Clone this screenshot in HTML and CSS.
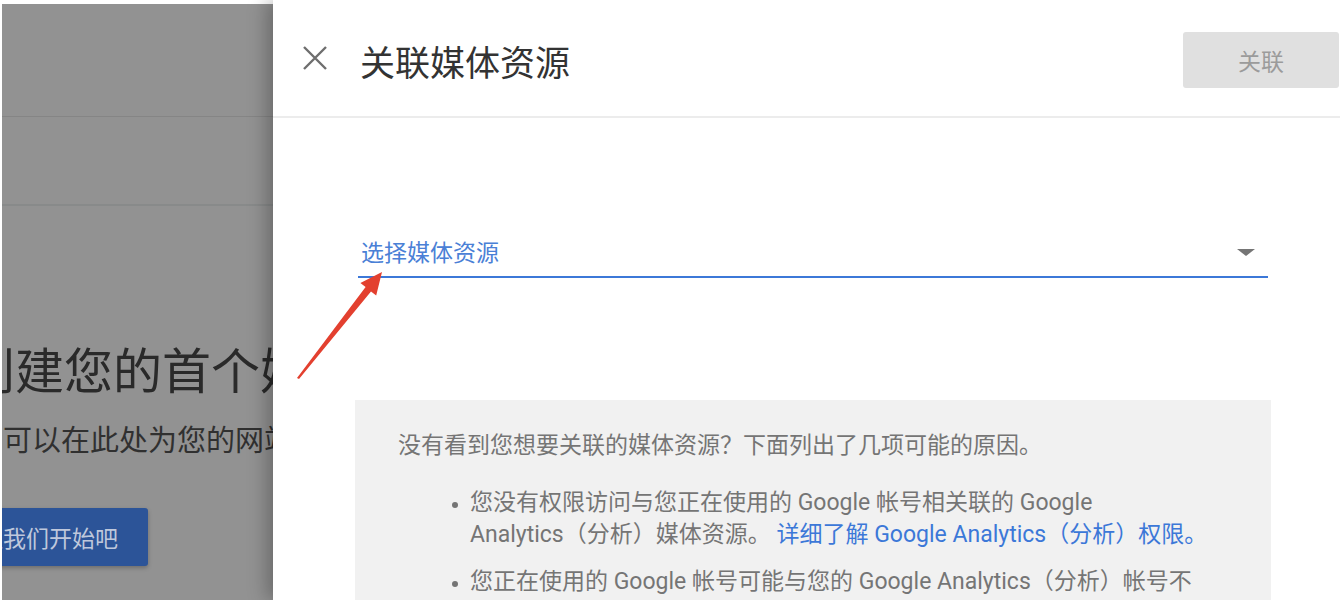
FILE: index.html
```html
<!DOCTYPE html>
<html lang="zh-CN">
<head>
    <meta charset="UTF-8">
    <meta name="viewport" content="width=device-width, initial-scale=1.0">
    <title>关联媒体资源</title>

    <link rel="stylesheet" href="styles.css">
</head>
<body>

    <div class="backdrop">
        <div class="bg-header"></div>
        <div class="bg-tabs"></div>
        <div class="bg-content">
            <h1 class="bg-title">创建您的首个媒体资源</h1>
            <p class="bg-sub">您可以在此处为您的网站或应用创建媒体资源</p>
            <button class="bg-btn">让我们开始吧</button>
        </div>
    </div>

    <div class="panel">
        <div class="panel-header">
            <button class="close" aria-label="关闭">
                <svg width="24" height="24" viewBox="0 0 24 24">
                    <path d="M1 1 L23 23 M23 1 L1 23" stroke="#6e6e6e" stroke-width="2.4" fill="none"/>
                </svg>
            </button>
            <h2 class="panel-title">关联媒体资源</h2>
            <button class="link-btn" disabled>关联</button>
        </div>

        <div class="panel-body">
            <div class="select">
                <span class="select-label">选择媒体资源</span>
                <span class="caret"></span>
            </div>

            <div class="info">
                <p>没有看到您想要关联的媒体资源？下面列出了几项可能的原因。</p>
                <ul>
                    <li>您没有权限访问与您正在使用的 Google 帐号相关联的 Google<br>Analytics（分析）媒体资源。 <a href="#">详细了解 Google Analytics（分析）权限。</a></li>
                    <li>您正在使用的 Google 帐号可能与您的 Google Analytics（分析）帐号不同，请切换帐号后重试。</li>
                </ul>
            </div>
        </div>
    </div>

    <svg class="annotation" width="1340" height="600" viewBox="0 0 1340 600">
        <polygon points="297,378 365.6,287.1 360.4,283.1 382,272 376.2,295.5 371,291.5 299,379" fill="#e3402f"/>
    </svg>

</body>
</html>
```

FILE: styles.css
```css
body {
    margin: 0;
    padding: 0;
    height: 600px;
    overflow: hidden;
    display: flex;
    background: #fff;
    font-family: Roboto, "Noto Sans CJK SC", sans-serif;
}

/* dimmed page behind the panel */
.backdrop {
    width: 271px;
    margin: 4px 0 0 2px;
    background: #929292;
    overflow: hidden;
    white-space: nowrap;
}

.bg-header {
    height: 112px;
    border-bottom: 1px solid #858585;
}

.bg-tabs {
    height: 87px;
    border-bottom: 2px solid #888a8a;
}

.bg-content {
    padding-top: 137px;
}

.bg-title {
    margin: 0 0 0 -36px;
    font-size: 49px;
    line-height: 60px;
    font-weight: 400;
    color: #2a2a2a;
}

.bg-sub {
    margin: 20px 0 0 -28px;
    font-size: 29px;
    line-height: 36px;
    color: #303030;
}

.bg-btn {
    display: block;
    margin: 49px 0 0 -60px;
    width: 206px;
    height: 58px;
    padding: 0 0 0 38px;
    text-align: left;
    border: 0;
    border-radius: 3px;
    background: #2c5498;
    color: #bfc8dc;
    font-family: inherit;
    font-size: 23px;
    box-shadow: 0 2px 4px rgba(0,0,0,0.25);
}

/* side panel */
.panel {
    flex: 1;
    background: #fff;
    box-shadow: -6px 0 18px rgba(0,0,0,0.28);
    position: relative;
}

.panel-header {
    height: 116px;
    border-bottom: 2px solid #ececec;
    display: flex;
    align-items: center;
}

.close {
    margin-left: 30px;
    padding: 0;
    border: 0;
    background: none;
    width: 24px;
    height: 24px;
    display: flex;
}

.panel-title {
    margin: 4px 0 0 33px;
    font-size: 35px;
    font-weight: 400;
    color: #333;
}

.link-btn {
    margin: 4px 1px 0 auto;
    width: 156px;
    height: 56px;
    border: 0;
    border-radius: 3px;
    background: #e0e0e0;
    color: #9b9b9b;
    font-family: inherit;
    font-size: 23px;
}

.panel-body {
    padding: 121px 0 0 82px;
}

.select {
    width: 910px;
    margin-left: 3px;
    display: flex;
    align-items: center;
    justify-content: space-between;
    padding-bottom: 7px;
    border-bottom: 2px solid #3c78d8;
}

.select-label {
    font-size: 23px;
    line-height: 30px;
    color: #4a80d6;
    padding-left: 3px;
}

.caret {
    width: 0;
    height: 0;
    margin: 0 13px 4px 0;
    border-left: 9px solid transparent;
    border-right: 9px solid transparent;
    border-top: 7px solid #757575;
}

.info {
    width: 916px;
    box-sizing: border-box;
    margin-top: 122px;
    padding: 30px 61px 30px 43px;
    background: #f1f1f1;
    color: #757575;
    font-size: 23px;
    line-height: 32px;
}

.info p {
    margin: 0;
}

.info ul {
    margin: 25px 0 0;
    padding-left: 72px;
}

.info li {
    margin-bottom: 15px;
}

.info li::marker {
    font-size: 18px;
}

.info a {
    color: #3c78d8;
    text-decoration: none;
}

.annotation {
    position: absolute;
    left: 0;
    top: 0;
    pointer-events: none;
}
```
